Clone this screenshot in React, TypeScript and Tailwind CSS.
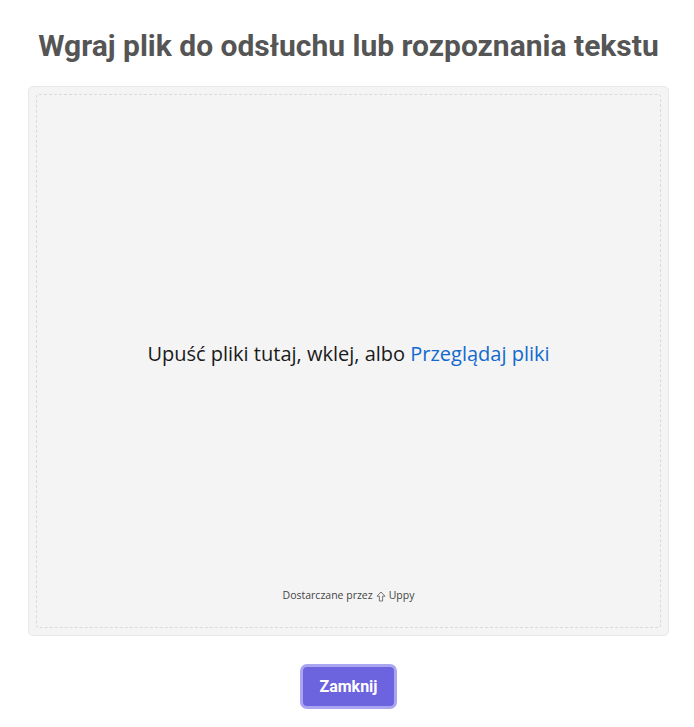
export default function App() {
  return (
    <div className="min-h-screen bg-white pl-[28px] pr-[25px] pt-[26px]">
      <h1 className="text-center font-['Roboto',sans-serif] text-[30px] font-bold leading-[40px] text-[#555555]">
        Wgraj plik do odsłuchu lub rozpoznania tekstu
      </h1>

      <div className="mt-[20px] h-[550px] rounded-[5px] border border-[#e8e8e8] bg-[#f4f4f4] p-[7px]">
        <div className="flex h-full flex-col rounded-[3px] border border-dashed border-[#dadada] font-['Open_Sans','Noto_Sans',sans-serif]">
          <div className="flex flex-1 items-center justify-center pt-[24px]">
            <p className="text-[20px] text-[#1a1a1a]">
              Upuść pliki tutaj, wklej, albo{' '}
              <span className="cursor-pointer text-[#1269cf]">Przeglądaj pliki</span>
            </p>
          </div>
          <div className="flex items-center justify-center gap-[3px] pb-[23px] text-[10.5px] text-[#444]">
            <span>Dostarczane przez</span>
            <svg width="10" height="11" viewBox="0 0 10 11" fill="none" stroke="#666" strokeWidth="0.9">
              <path d="M5 1 L9 5.2 H6.6 V10 H3.4 V5.2 H1 Z" strokeLinejoin="round" />
            </svg>
            <span>Uppy</span>
          </div>
        </div>
      </div>

      <div className="mt-[28px] flex justify-center">
        <button className="h-[45px] w-[97px] rounded-[7px] border-[3px] border-[#aba5f1] bg-[#6c63df] font-['Roboto',sans-serif] text-[16px] font-bold text-white">
          Zamknij
        </button>
      </div>
    </div>
  );
}
